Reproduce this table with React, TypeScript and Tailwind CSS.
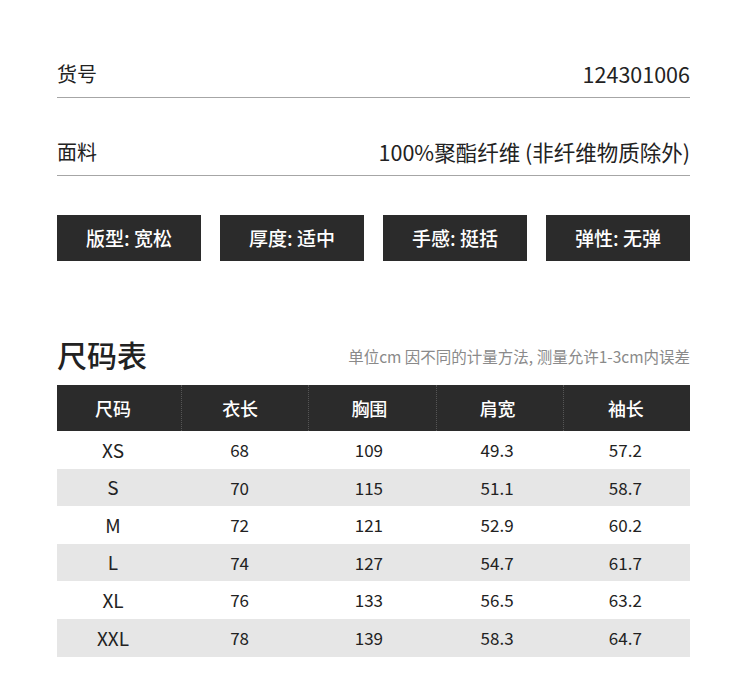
import React from "react";

const font = { fontFamily: '"Noto Sans CJK SC", "Noto Sans", sans-serif' };

const badges = ["版型: 宽松", "厚度: 适中", "手感: 挺括", "弹性: 无弹"];
const headers = ["尺码", "衣长", "胸围", "肩宽", "袖长"];
const shifts = ["pr-[12px]", "pr-[10px]", "pr-[6px]", "pr-[4px]", "pr-[2px]"];
const rows = [
  ["XS", "68", "109", "49.3", "57.2"],
  ["S", "70", "115", "51.1", "58.7"],
  ["M", "72", "121", "52.9", "60.2"],
  ["L", "74", "127", "54.7", "61.7"],
  ["XL", "76", "133", "56.5", "63.2"],
  ["XXL", "78", "139", "58.3", "64.7"],
];

export default function App() {
  return (
    <div className="w-[750px] h-[692px] bg-white text-[#222]" style={font}>
      <div className="pl-[57px] pr-[60px] pt-[20px] w-[750px] box-border">
        <div className="h-[78px] flex items-end justify-between pb-[11px] border-b border-[#a6a6a6]">
          <span className="text-[20px] leading-[24px]">货号</span>
          <span className="text-[21.5px] leading-[24px]">124301006</span>
        </div>
        <div className="h-[78px] flex items-end justify-between pb-[11px] border-b border-[#a6a6a6]">
          <span className="text-[20px] leading-[24px]">面料</span>
          <span className="text-[21.5px] leading-[24px]">100%聚酯纤维 (非纤维物质除外)</span>
        </div>
        <div className="mt-[39px] grid grid-cols-4 gap-[19px]">
          {badges.map((b) => (
            <div
              key={b}
              className="h-[46px] bg-[#2b2b2b] text-white flex items-center justify-center text-[19px] font-medium"
            >
              {b}
            </div>
          ))}
        </div>
        <div className="mt-[73px] h-[40px] flex items-center justify-between">
          <span className="text-[30px] leading-[40px] font-medium">尺码表</span>
          <span className="text-[15.5px] text-[#8a8a8a] mt-[6px]">
            单位cm 因不同的计量方法, 测量允许1-3cm内误差
          </span>
        </div>
        <div className="mt-[11px]">
          <div className="grid grid-cols-[124px_1fr_1fr_1fr_1fr] h-[46px] bg-[#2b2b2b] text-white">
            {headers.map((h, i) => (
              <div
                key={h}
                className={`flex items-center justify-center text-[18px] font-medium ${shifts[i]} ${
                  i > 0 ? "border-l border-dotted border-[#555]" : ""
                }`}
              >
                {h}
              </div>
            ))}
          </div>
          {rows.map((r, ri) => (
            <div
              key={r[0]}
              className={`grid grid-cols-[124px_1fr_1fr_1fr_1fr] h-[37.6px] ${
                ri % 2 === 1 ? "bg-[#e6e6e6]" : "bg-white"
              }`}
            >
              {r.map((c, ci) => (
                <div
                  key={ci}
                  className={`flex items-center justify-center ${shifts[ci]} ${
                    ci === 0 ? "text-[19px]" : "text-[17px]"
                  }`}
                >
                  {c}
                </div>
              ))}
            </div>
          ))}
        </div>
      </div>
    </div>
  );
}
